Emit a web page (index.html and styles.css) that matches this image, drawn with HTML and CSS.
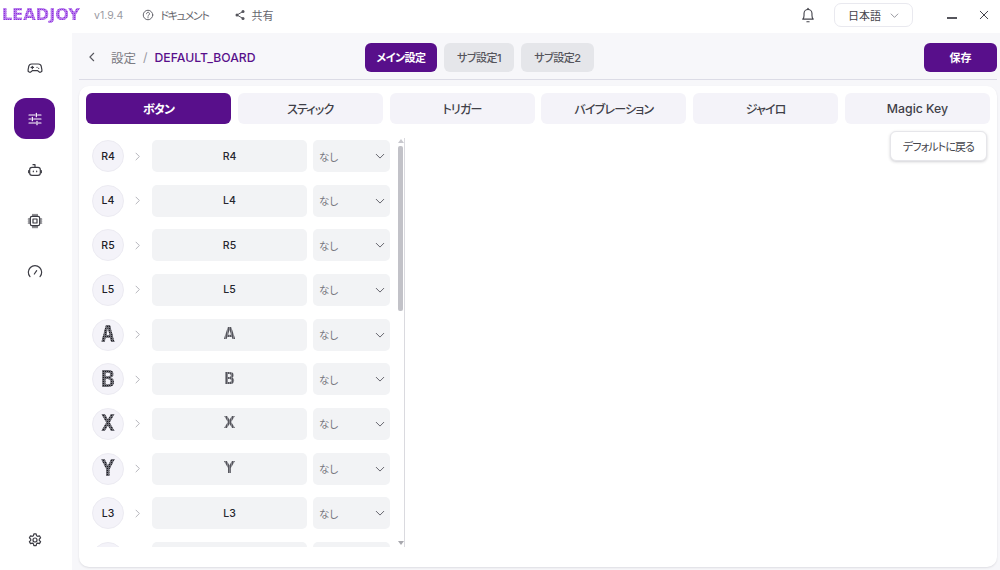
FILE: index.html
```html
<!DOCTYPE html>
<html lang="ja">
<head>
<meta charset="utf-8">
<title>LEADJOY</title>
<link rel="stylesheet" href="styles.css">
</head>
<body>
<div class="app">
  <header class="titlebar">
    <span class="logo">LEADJOY</span>
    <span class="version">v1.9.4</span>
    <span class="link link-doc">
      <svg class="ic14" viewBox="0 0 24 24"><circle cx="12" cy="12" r="9.5"/><path d="M9 9.500a3 3 0 1 1 4.600 2.500c-1 .7-1.600 1.300-1.600 2.500"/><path d="M12 17.200v.6"/></svg>
      <span class="doc-label">ドキュメント</span>
    </span>
    <span class="link link-share">
      <svg class="ic14 solid" viewBox="0 0 24 24"><circle cx="18" cy="5" r="3"/><circle cx="6" cy="12" r="3"/><circle cx="18" cy="19" r="3"/><path class="thin" d="M18 5 6 12l12 7"/></svg>
      共有
    </span>
    <span class="spacer"></span>
    <svg class="bell" viewBox="0 0 24 24"><path d="M5 17.500c1.200-1.300 1.700-2.600 1.700-5V10a5.300 5.300 0 0 1 10.600 0v2.500c0 2.400.5 3.700 1.700 5z"/><path d="M10.500 21h3"/><path d="M12 3v1.500"/></svg>
    <span class="lang">日本語
      <svg class="ic12" viewBox="0 0 24 24"><path d="m3 8 9 9 9-9"/></svg>
    </span>
    <span class="win-min"></span>
    <svg class="win-close" viewBox="0 0 12 12"><path d="m1.500 1.500 9 9m0-9-9 9"/></svg>
  </header>

  <div class="body">
    <nav class="sidebar">
      <a class="nav-item">
        <svg class="nav-ic" viewBox="0 0 24 24"><path d="M7 6h10a4.500 4.500 0 0 1 4.400 3.600l1 5.400a2.800 2.800 0 0 1-5 2.200L16 16H8l-1.400 1.200a2.800 2.800 0 0 1-5-2.200l1-5.400A4.500 4.500 0 0 1 7 6z"/><path d="M8 9.500v3.500M6.200 11.200h3.600M15 11h.1M17.500 12.500h.1"/></svg>
      </a>
      <a class="nav-item active">
        <svg class="nav-ic" viewBox="0 0 24 24"><path d="M3 6h9M16 6h5M3 12h3M10 12h11M3 18h10M17 18h4"/><path d="M14 3.500v5M8 9.500v5M15 15.500v5"/></svg>
      </a>
      <a class="nav-item">
        <svg class="nav-ic" viewBox="0 0 24 24"><rect x="4" y="8" width="16" height="12" rx="3.500"/><path d="M12 8V4H9M2.500 13v3M21.500 13v3M9.500 13.500v1M14.500 13.500v1"/></svg>
      </a>
      <a class="nav-item">
        <svg class="nav-ic" viewBox="0 0 24 24"><rect x="5" y="5" width="14" height="14" rx="2.500"/><rect x="9" y="9" width="6" height="6"/><path d="M9 2v3M12 2v3M15 2v3M9 19v3M12 19v3M15 19v3M2 9h3M2 12h3M2 15h3M19 9h3M19 12h3M19 15h3"/></svg>
      </a>
      <a class="nav-item">
        <svg class="nav-ic" viewBox="0 0 24 24"><path d="M4.500 19a10 10 0 1 1 15 0"/><path d="m11 15 3.500-5"/></svg>
      </a>
      <a class="nav-item nav-bottom">
        <svg class="nav-ic" viewBox="0 0 24 24"><path d="M10.300 2.800h3.400l.6 2.700 1.700 1 2.700-.8 1.700 3-2 1.900v2l2 1.900-1.700 3-2.700-.8-1.700 1-.6 2.700h-3.400l-.6-2.700-1.700-1-2.700.8-1.700-3 2-1.900v-2l-2-1.900 1.700-3 2.700.8 1.700-1z"/><circle cx="12" cy="12" r="3"/></svg>
      </a>
    </nav>

    <main class="main">
      <div class="topbar">
        <div class="crumbs">
          <svg class="back" viewBox="0 0 12 12"><path d="M8 1.500 3.500 6 8 10.500"/></svg>
          <span class="crumb">設定</span>
          <span class="sep">/</span>
          <span class="crumb-current">DEFAULT_BOARD</span>
        </div>
        <div class="profiles">
          <button class="btn btn-primary">メイン設定</button>
          <button class="btn btn-gray">サブ設定1</button>
          <button class="btn btn-gray">サブ設定2</button>
        </div>
        <button class="btn btn-primary btn-save">保存</button>
      </div>

      <section class="card">
        <div class="tabs">
          <button class="tab tab-active">ボタン</button>
          <button class="tab">スティック</button>
          <button class="tab">トリガー</button>
          <button class="tab">バイブレーション</button>
          <button class="tab">ジャイロ</button>
          <button class="tab tab-latin">Magic Key</button>
        </div>
        <div class="content">
          <div class="list-wrap">
            <div class="list" id="list"></div>
            <div class="scrollbar">
              <span class="arrow-up"></span>
              <span class="track"><span class="thumb"></span></span>
              <span class="arrow-down"></span>
            </div>
          </div>
          <div class="side">
            <button class="reset">デフォルトに戻る</button>
          </div>
        </div>
      </section>
    </main>
  </div>
</div>
<template id="row">
  <div class="row">
    <span class="badge"><span class="cap"></span></span>
    <svg class="chev" viewBox="0 0 12 12"><path d="m4 1.500 4.500 4.500L4 10.500"/></svg>
    <span class="field"><span class="cap"></span></span>
    <span class="select">なし
      <svg class="ic10" viewBox="0 0 12 12"><path d="m1.500 4 4.500 4.500L10.500 4"/></svg>
    </span>
  </div>
</template>
<script>
  var names = ["R4","L4","R5","L5","A","B","X","Y","L3",""];
  var pixel = {A:1,B:1,X:1,Y:1};
  var list = document.getElementById("list");
  var tpl = document.getElementById("row");
  names.forEach(function (n) {
    var r = tpl.content.cloneNode(true);
    var b = r.querySelector(".badge .cap"), f = r.querySelector(".field .cap");
    b.textContent = n; f.textContent = n;
    if (pixel[n]) { b.classList.add("dots"); f.classList.add("dots-sm"); }
    if (n === "") { r.querySelector(".select").textContent = ""; r.querySelector(".chev").style.visibility = "hidden"; }
    list.appendChild(r);
  });
</script>
</body>
</html>
```
FILE: styles.css
```css
* { box-sizing: border-box; }
html, body { margin: 0; height: 100%; overflow: hidden; }
body {
  font-family: Inter, "Noto Sans CJK JP", sans-serif;
  font-feature-settings: "palt";
  font-size: 12px;
  color: #3a3a44;
  background: #fff;
}
svg { fill: none; stroke: currentColor; stroke-linecap: round; stroke-linejoin: round; flex: none; }
button { font: inherit; font-feature-settings: "palt"; border: 0; cursor: pointer; padding: 0; }

.app { display: flex; flex-direction: column; height: 570px; }

/* title bar */
.titlebar { height: 33px; flex: none; display: flex; align-items: center; padding-bottom: 3px; background: #fff; color: #66666e; }
.logo {
  width: 80px;
  margin-left: 2px;
  font-family: "DejaVu Sans", sans-serif;
  font-weight: 700;
  font-size: 16px;
  line-height: 18px;
  letter-spacing: .1px;
  white-space: nowrap;
  overflow: hidden;
  color: transparent;
  background-color: #8e2ede;
  background-image:
    linear-gradient(90deg, transparent 0 1px, #b77cec 1px 2px),
    linear-gradient(0deg, transparent 0 1px, #b77cec 1px 2px);
  background-size: 2px 2px;
  -webkit-background-clip: text;
  background-clip: text;
}
.version { margin-left: 12px; color: #9a9aa2; font-size: 10.500px; }
.link { display: flex; align-items: center; font-size: 11px; }
.link-doc { margin-left: 19px; gap: 6px; }
.doc-label { letter-spacing: -1.300px; }
.link-share { margin-left: 25px; gap: 6px; }
.ic14 { width: 12px; height: 12px; stroke-width: 2; }
.ic14.solid { fill: #55555c; stroke: none; }
.ic14 .thin { fill: none; stroke: #55555c; stroke-width: 2; }
.spacer { flex: 1; }
.bell { width: 18px; height: 18px; stroke-width: 1.500; color: #44444c; }
.lang {
  width: 79px; height: 24px; margin-left: 17px;
  display: flex; align-items: center; justify-content: center; gap: 9px;
  border: 1px solid #e9e9ef; border-radius: 7px;
  font-size: 11px; color: #44444c;
}
.ic12 { width: 9px; height: 9px; stroke-width: 2; color: #77777f; }
.win-min { width: 10px; height: 2px; margin-left: 34px; margin-top: 6px; background: #55555c; }
.win-close { width: 10px; height: 10px; margin-left: 22px; margin-right: 11px; stroke-width: 1.200; color: #44444c; }

/* layout */
.body { flex: 1; display: flex; min-height: 0; }
.sidebar { width: 72px; flex: none; display: flex; flex-direction: column; gap: 10px; padding: 14px 0 10px 14px; background: #fff; }
.nav-item { width: 41px; height: 41px; display: flex; align-items: center; justify-content: center; border-radius: 12px; color: #3c3c44; }
.nav-item.active { background: #580f8b; color: #fff; }
.nav-bottom { margin-top: auto; }
.nav-ic { width: 16px; height: 16px; stroke-width: 1.800; }
.main { flex: 1; min-width: 0; display: flex; flex-direction: column; padding: 0 3px 3px 7px; background: #f7f7fa; }

/* top bar */
.topbar { height: 47px; flex: none; display: flex; align-items: center; padding-top: 2px; border-bottom: 1px solid #dcdce6; }
.crumbs { width: 286px; flex: none; display: flex; align-items: center; font-size: 12.500px; }
.back { width: 10px; height: 10px; margin-left: 8px; stroke-width: 1.300; color: #55555c; }
.crumb { margin-left: 14px; color: #7b7b83; }
.sep { margin-left: 7px; color: #9a9aa2; }
.crumb-current { margin-left: 7px; color: #580f8b; font-weight: 500; font-size: 12.200px; }
.profiles { display: flex; gap: 7px; }
.btn { height: 29px; border-radius: 6px; font-size: 11px; font-weight: 500; letter-spacing: -.5px; }
.btn-primary { width: 72px; background: #580f8b; color: #fff; font-weight: 700; }
.btn-gray { width: 70px; background: #e5e6ea; color: #55555c; }
.btn-gray:last-child { width: 73px; }
.btn-save { width: 73px; margin-left: auto; letter-spacing: 0; }

/* card */
.card { flex: 1; min-height: 0; margin-top: 6px; padding: 7px 7px 0; background: #fff; border-radius: 10px; box-shadow: 0 1px 2px rgba(40,40,60,.12); display: flex; flex-direction: column; }
.tabs { display: flex; gap: 6.800px; flex: none; }
.tab { flex: 1; height: 31px; padding-bottom: 1px; border-radius: 6px; background: #f4f3f9; color: #3f3f48; font-size: 12px; font-weight: 500; letter-spacing: -.8px; }
.tab-active { background: #580f8b; color: #fff; font-weight: 700; }
.tab-latin { font-size: 12.300px; letter-spacing: 0; }

.content { flex: 1; min-height: 0; display: flex; padding-top: 7px; }
.list-wrap { width: 319px; flex: none; display: flex; margin-top: 7px; }
.list { width: 311px; height: 409px; overflow: hidden; padding: 2px 0 0 6px; display: flex; flex-direction: column; gap: 12.670px; }
.row { display: flex; align-items: center; height: 32px; flex: none; }
.badge {
  width: 32px; height: 32px; flex: none; border-radius: 50%;
  display: flex; align-items: center; justify-content: center;
  background: #f4f3f9; border: 1px solid #ecebf2;
  font-size: 10.500px; font-weight: 500; color: #1e1e28;
}
.chev { width: 9px; height: 9px; margin: 0 10px 0 9px; stroke-width: 1.300; color: #b4b4ba; }
.field {
  width: 155px; height: 32px; flex: none; border-radius: 5px;
  display: flex; align-items: center; justify-content: center;
  background: #f2f3f5; font-size: 10.500px; font-weight: 500; color: #26262e;
}
.select {
  width: 77px; height: 32px; flex: none; margin-left: 6px; border-radius: 5px; padding: 0 5px 0 6px;
  display: flex; align-items: center; justify-content: space-between;
  background: #f2f3f5; font-size: 10.500px; color: #77777f;
}
.ic10 { width: 10px; height: 10px; stroke-width: 1.200; color: #66666e; }
.dots, .dots-sm {
  color: transparent;
  font-weight: 700;
  line-height: 1;
  -webkit-background-clip: text;
  background-clip: text;
}
.dots {
  font-family: "DejaVu Sans Mono", monospace;
  font-size: 23px;
  background-color: #1c1c22;
  background-image:
    linear-gradient(90deg, transparent 0 1px, #6e6e76 1px 2px),
    linear-gradient(0deg, transparent 0 1px, #6e6e76 1px 2px);
  background-size: 2px 2px;
}
.dots-sm {
  font-family: "DejaVu Sans", sans-serif;
  font-size: 15px;
  background-color: #55555c;
  background-image:
    linear-gradient(90deg, transparent 0 1px, #85858c 1px 2px);
  background-size: 2px 2px;
}
.scrollbar { width: 8px; height: 409px; padding-top: 1px; border-right: 1px solid #dadadf; display: flex; flex-direction: column; align-items: center; gap: 3px; }
.track { flex: 1; width: 5px; }
.thumb { display: block; width: 5px; height: 165px; margin: 0 auto; background: #c2c2c8; border-radius: 2px; }
.arrow-up { width: 0; height: 0; border: 3px solid transparent; border-top: 0; border-bottom: 4px solid #c8c8ce; }
.arrow-down { width: 0; height: 0; margin-bottom: 2px; border: 3px solid transparent; border-bottom: 0; border-top: 4px solid #a8a8ae; }
.side { flex: 1; display: flex; justify-content: flex-end; align-items: flex-start; padding-right: 3px; }
.reset {
  width: 97px; height: 30px; border-radius: 6px; background: #fff;
  border: 1px solid #e6e6ea; box-shadow: 0 1px 3px rgba(40,40,60,.22);
  font-size: 11px; letter-spacing: -.9px; color: #44444c;
}
```
